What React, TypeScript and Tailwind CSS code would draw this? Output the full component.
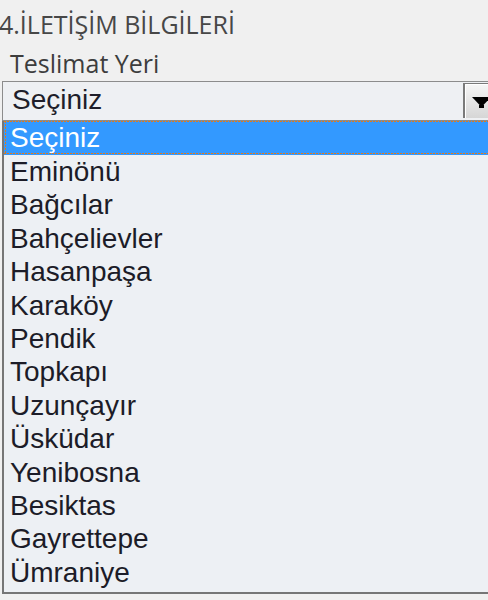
import React from "react";

const items = [
  "Eminönü",
  "Bağcılar",
  "Bahçelievler",
  "Hasanpaşa",
  "Karaköy",
  "Pendik",
  "Topkapı",
  "Uzunçayır",
  "Üsküdar",
  "Yenibosna",
  "Besiktas",
  "Gayrettepe",
  "Ümraniye",
];

export default function App() {
  return (
    <div className="w-[488px] h-[600px] overflow-hidden bg-[#f0f0f0]">
      <div
        className="pt-[7px] ml-[-1px] text-[25px] leading-[34px] text-[#474747] whitespace-nowrap"
        style={{ fontFamily: '"Open Sans", "Noto Sans", sans-serif' }}
      >
        4.İLETİŞİM BİLGİLERİ
      </div>
      <div
        className="mt-[5px] ml-[10px] text-[25px] leading-[34px] text-[#3d3d3d] whitespace-nowrap"
        style={{ fontFamily: '"Open Sans", "Noto Sans", sans-serif' }}
      >
        Teslimat Yeri
      </div>
      <div
        className="mt-[1px] ml-[2px] w-[500px]"
        style={{ fontFamily: '"Liberation Sans", Arial, sans-serif' }}
      >
        <div className="h-[40px] flex border border-[#8c8c8c] bg-[#eef0f3]">
          <div className="flex-1 pl-[9px] pt-[2px] text-[28px] leading-[32px] text-[#1e1e2a]">
            Seçiniz
          </div>
          <div className="w-[38px] h-[35px] mt-[1px] border-l-2 border-t border-[#7a7a7a] bg-gradient-to-b from-[#f6f6f6] to-[#d6d6d6] shadow-[inset_1px_1px_0_#ffffff] flex items-start">
            <svg width="20" height="14" viewBox="0 0 20 14" className="mt-[13px] ml-[7px]">
              <polygon points="0,0 19,0 9.5,10" fill="#000" />
              <rect x="7" y="8" width="5" height="3" fill="#000" />
            </svg>
          </div>
        </div>
        <div className="border-l-2 border-b-2 border-[#767676] bg-[#edf0f4] pb-[3px]">
          <div className="relative h-[34px] bg-[#3399ff] text-white pl-[6px] text-[28px] leading-[33px]">
            <div className="absolute left-0 right-0 top-0 h-[1px] bg-[repeating-linear-gradient(90deg,#de7a1e_0px,#de7a1e_2px,transparent_2px,transparent_3px)]" />
            <div className="absolute left-0 right-0 bottom-[1px] h-[1px] bg-[repeating-linear-gradient(90deg,#de7a1e_0px,#de7a1e_2px,transparent_2px,transparent_3px)]" />
            <div className="absolute left-[1px] top-0 bottom-[1px] w-[1px] bg-[repeating-linear-gradient(180deg,#de7a1e_0px,#de7a1e_2px,transparent_2px,transparent_3px)]" />
            Seçiniz
          </div>
          {items.map((it) => (
            <div
              key={it}
              className="h-[33.4px] pl-[6px] text-[28px] leading-[33.4px] text-[#1c1c28] whitespace-nowrap"
            >
              {it}
            </div>
          ))}
        </div>
      </div>
    </div>
  );
}
